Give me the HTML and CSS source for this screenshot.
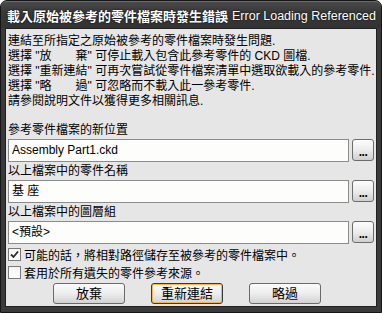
FILE: index.html
```html
<!DOCTYPE html>
<html lang="zh-Hant">
<head>
    <meta charset="UTF-8">
    <title>載入原始被參考的零件檔案時發生錯誤</title>
    <link rel="stylesheet" href="styles.css">
</head>
<body>
<div class="window">
    <div class="titlebar">
        <span class="title-zh">載入原始被參考的零件檔案時發生錯誤</span>
        <span class="title-en">Error Loading Referenced</span>
    </div>
    <div class="client">
        <div class="msg">
            <p>連結至所指定之原始被參考的零件檔案時發生問題.</p>
            <p>選擇 "放　　棄" 可停止載入包含此參考零件的 CKD 圖檔.</p>
            <p>選擇 "重新連結" 可再次嘗試從零件檔案清單中選取欲載入的參考零件.</p>
            <p>選擇 "略　　過" 可忽略而不載入此一參考零件.</p>
            <p>請參閱說明文件以獲得更多相關訊息.</p>
        </div>

        <div class="field">
            <div class="label">參考零件檔案的新位置</div>
            <div class="row">
                <div class="input">Assembly Part1.ckd</div>
                <span class="browse">...</span>
            </div>
        </div>
        <div class="field">
            <div class="label">以上檔案中的零件名稱</div>
            <div class="row">
                <div class="input">基 座</div>
                <span class="browse">...</span>
            </div>
        </div>
        <div class="field">
            <div class="label">以上檔案中的圖層組</div>
            <div class="row">
                <div class="input">&lt;預設&gt;</div>
                <span class="browse">...</span>
            </div>
        </div>

        <div class="check">
            <span class="box checked">
                <svg width="9" height="9" viewBox="0 0 9 9"><path d="M1 4.5 L3.5 7 L8 1.5" fill="none" stroke="#2a2a2a" stroke-width="1.8"/></svg>
            </span>
            <span>可能的話，將相對路徑儲存至被參考的零件檔案中。</span>
        </div>
        <div class="check">
            <span class="box"></span>
            <span>套用於所有遺失的零件參考來源。</span>
        </div>

        <div class="buttons">
            <span class="btn">放棄</span>
            <span class="btn default">重新連結</span>
            <span class="btn">略過</span>
        </div>
    </div>
</div>
</body>
</html>
```

FILE: styles.css
```css
*{
    margin: 0px;
    padding: 0px;
    box-sizing: border-box;
}
body{
    background: #fff;
    font-family: "Liberation Sans", "Noto Sans CJK TC", sans-serif;
    font-size: 12px;
    color: #000;
}
.window{
    width: 382px;
    height: 313px;
    background: #3a3a3a;
    border: 1px solid #151515;
    border-radius: 7px 7px 0 0;
    padding: 0 4px 5px 4px;
    display: flex;
    flex-direction: column;
}
.titlebar{
    height: 27px;
    flex: none;
    display: flex;
    align-items: center;
    gap: 4px;
    white-space: nowrap;
    overflow: hidden;
    color: #fff;
    text-shadow: 0 0 2px #000;
    background: linear-gradient(#4a4a4a, #383838 40%, #333);
    margin: 0 -4px;
    padding-left: 6px;
    border-radius: 6px 6px 0 0;
    border-top: 1px solid #6a6a6a;
}
.title-zh{
    flex: none;
    font-family: "Noto Sans CJK TC", sans-serif;
    font-weight: bold;
    font-size: 13px;
}
.title-en{
    flex: none;
    font-size: 12.5px;
    padding-top: 2px;
}
.client{
    flex: 1;
    background: #e6e6e6;
    border: 1px solid #202020;
    padding: 5px 2px 0 2px;
}
.msg{
    margin-bottom: 13px;
}
.msg p{
    line-height: 15px;
    white-space: pre;
}
.field{
    margin-bottom: 1px;
}
.label{
    height: 17px;
    line-height: 16px;
}
.row{
    display: flex;
    gap: 3px;
}
.input{
    flex: 1;
    height: 23px;
    line-height: 21px;
    background: #fdfefb;
    border: 1px solid #8c8c8c;
    padding-left: 3px;
}
.browse{
    width: 22px;
    height: 22px;
    border: 1px solid #6c6c6c;
    border-radius: 3px;
    background: linear-gradient(#fdfdfd, #ececec 50%, #cfcfcf);
    font-weight: bold;
    font-size: 12px;
    line-height: 22px;
    text-align: center;
    letter-spacing: -0.5px;
    padding-top: 1px;
}
.check{
    height: 18px;
    display: flex;
    align-items: center;
    gap: 3px;
}
.check:first-of-type{
    margin-top: 2px;
}
.box{
    width: 13px;
    height: 13px;
    border: 1px solid #7a7a7a;
    background: linear-gradient(#f4f4f4, #fff);
    display: flex;
    align-items: center;
    justify-content: center;
}
.buttons{
    display: flex;
    gap: 26px;
    padding-left: 45px;
    margin-top: 2px;
}
.btn{
    width: 72px;
    height: 21px;
    border: 1px solid #6a6a6a;
    border-radius: 3px;
    background: linear-gradient(#fbfbfb, #ededed 50%, #d2d2d2);
    text-align: center;
    line-height: 19px;
    font-size: 13px;
}
.btn.default{
    border-color: #3a3a3a;
    box-shadow: inset 0 0 0 1px #f3b54f;
}
```
